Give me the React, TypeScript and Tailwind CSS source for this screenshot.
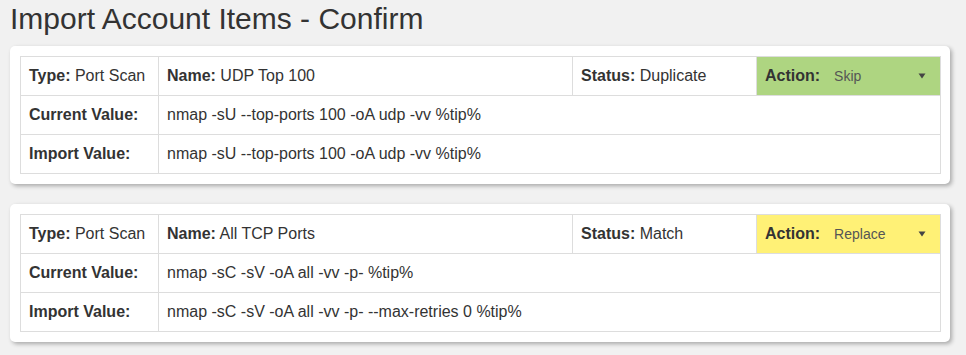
const ITEMS = [
  {
    type: 'Port Scan',
    name: 'UDP Top 100',
    status: 'Duplicate',
    action: 'Skip',
    tone: 'bg-[#aed581]',
    current: 'nmap -sU --top-ports 100 -oA udp -vv %tip%',
    incoming: 'nmap -sU --top-ports 100 -oA udp -vv %tip%',
  },
  {
    type: 'Port Scan',
    name: 'All TCP Ports',
    status: 'Match',
    action: 'Replace',
    tone: 'bg-[#fff176]',
    current: 'nmap -sC -sV -oA all -vv -p- %tip%',
    incoming: 'nmap -sC -sV -oA all -vv -p- --max-retries 0 %tip%',
  },
]

const cell = 'border border-[#ddd] px-2 py-0 h-[39px] align-middle'

function ItemCard({ item }: { item: (typeof ITEMS)[number] }) {
  return (
    <div className="w-[940px] ml-[10px] rounded-[5px] bg-white p-[10px] shadow-[2px_2px_4px_rgba(0,0,0,0.3)]">
      <table className="w-[920px] border-collapse table-fixed text-[16px] text-[#333]">
        <colgroup>
          <col className="w-[138px]" />
          <col className="w-[414px]" />
          <col className="w-[184px]" />
          <col className="w-[184px]" />
        </colgroup>
        <tbody>
          <tr>
            <td className={cell}>
              <b>Type:</b> {item.type}
            </td>
            <td className={cell}>
              <b>Name:</b> {item.name}
            </td>
            <td className={cell}>
              <b>Status:</b> {item.status}
            </td>
            <td className={`${cell} ${item.tone}`}>
              <div className="flex items-center">
                <b>Action:</b>
                <div className="flex flex-1 items-center justify-between pl-[14px] pr-[6px] text-[14px] text-[#555]">
                  <span>{item.action}</span>
                  <svg width="8" height="6" viewBox="0 0 8 6">
                    <path d="M0.5 0.5h7L4 5.5z" fill="#444" />
                  </svg>
                </div>
              </div>
            </td>
          </tr>
          <tr>
            <td className={`${cell} font-bold`}>Current Value:</td>
            <td className={cell} colSpan={3}>
              {item.current}
            </td>
          </tr>
          <tr>
            <td className={`${cell} font-bold`}>Import Value:</td>
            <td className={cell} colSpan={3}>
              {item.incoming}
            </td>
          </tr>
        </tbody>
      </table>
    </div>
  )
}

export default function App() {
  return (
    <div className="min-h-screen w-full bg-[#f1f1f1] font-['Liberation_Sans',Arial,sans-serif]">
      <h1 className="pl-[10px] pt-[2px] mb-[10px] text-[30px] leading-[34px] font-normal text-[#333]">
        Import Account Items - Confirm
      </h1>
      <div className="flex flex-col gap-[20px]">
        {ITEMS.map((item) => (
          <ItemCard key={item.name} item={item} />
        ))}
      </div>
    </div>
  )
}
